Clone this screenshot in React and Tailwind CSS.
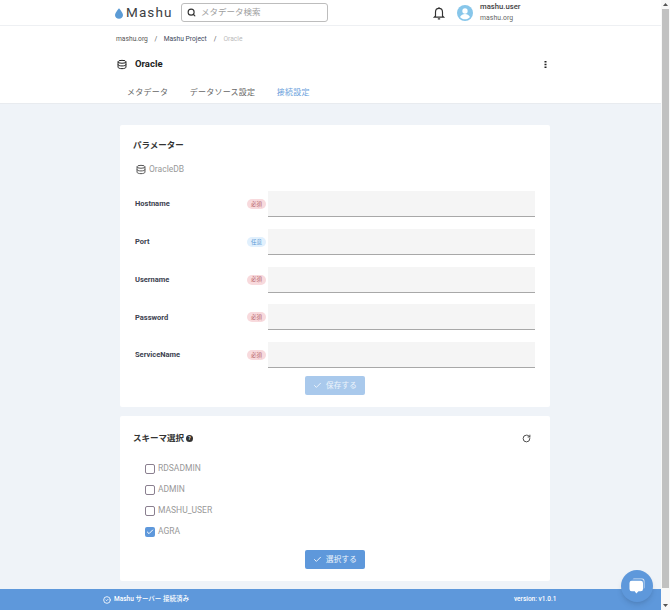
import React from 'react';
import { Search, Check, RotateCw, CircleCheck } from 'lucide-react';

const fontStack = "font-['Roboto','Noto_Sans_CJK_JP',sans-serif]";

const fields = [
  { name: 'Hostname', required: true },
  { name: 'Port', required: false },
  { name: 'Username', required: true },
  { name: 'Password', required: true },
  { name: 'ServiceName', required: true },
];

const schemas = [
  { name: 'RDSADMIN', checked: false },
  { name: 'ADMIN', checked: false },
  { name: 'MASHU_USER', checked: false },
  { name: 'AGRA', checked: true },
];

function DbIcon({ className }) {
  return (
    <svg className={className} viewBox="0 0 24 24" fill="none" stroke="currentColor" strokeWidth="2.4">
      <ellipse cx="12" cy="5.5" rx="9.5" ry="3.5" />
      <path d="M2.500 5.500v13c0 1.900 4.200 3.500 9.500 3.500s9.500-1.600 9.500-3.500v-13" />
      <path d="M2.500 12c0 1.900 4.200 3.500 9.500 3.500s9.500-1.600 9.500-3.500" />
    </svg>
  );
}

function Header() {
  return (
    <div className="h-[26px] shrink-0 bg-white border-b border-[#eef0f3] flex items-center">
      <div className="ml-[115px] flex items-center w-[66px]">
        <svg className="w-[8px] h-[11px] mt-[1px] shrink-0" viewBox="0 0 18 24">
          <path d="M9 0C9 0 0 10 0 15.500C0 20.500 4 24 9 24C14 24 18 20.500 18 15.500C18 10 9 0 9 0Z" fill="#5b9bd5" />
        </svg>
        <span className="ml-[3px] text-[13.5px] tracking-[1.1px] text-[#3c4043]">Mashu</span>
      </div>
      <div className="w-[147px] h-[19px] border border-[#bdbdbd] rounded-[3px] flex items-center pl-[5px]">
        <Search className="w-[9px] h-[9px] text-[#333]" strokeWidth={3} />
        <span className="ml-[5px] text-[8.5px] text-[#9e9e9e]">メタデータ検索</span>
      </div>
      <svg className="ml-[104px] w-[14px] h-[14px] text-[#333]" viewBox="0 0 24 24" fill="none" stroke="currentColor" strokeWidth="2">
        <path d="M6 17V10.500C6 7 8.500 4 12 4s6 3 6 6.500V17l2 2H4l2-2Z" />
        <path d="M10 22h4M12 2v2" />
      </svg>
      <svg className="ml-[11px] w-[16px] h-[16px]" viewBox="0 0 24 24">
        <circle cx="12" cy="12" r="12" fill="#87c6ea" />
        <circle cx="12" cy="9" r="4" fill="#fff" />
        <path d="M4.500 18c1.500-3 4.500-4.500 7.500-4.500s6 1.500 7.500 4.500c-2 2.200-4.600 3.500-7.500 3.500s-5.500-1.300-7.500-3.500Z" fill="#fff" />
      </svg>
      <div className="ml-[7px] flex flex-col">
        <span className="text-[7.7px] leading-[11px] font-medium text-[#444]">mashu.user</span>
        <span className="mt-[0.500px] text-[6.8px] leading-[11px] tracking-[0.1px] text-[#666]">mashu.org</span>
      </div>
    </div>
  );
}

function SubHeader() {
  return (
    <div className="h-[78px] shrink-0 bg-white border-b border-[#e8ebef] pl-[116px] flex flex-col">
      <div className="mt-[8px] h-[10px] flex items-center text-[6.7px] text-[#555]">
        <span>mashu.org</span>
        <span className="mx-[6.500px]">/</span>
        <span className="text-[#3d4a5c]">Mashu Project</span>
        <span className="mx-[7px]">/</span>
        <span className="text-[#bbb]">Oracle</span>
      </div>
      <div className="mt-[13px] h-[14px] flex items-center">
        <DbIcon className="ml-[1px] w-[10px] h-[11px] text-[#222]" />
        <span className="ml-[8px] text-[9.5px] font-bold text-[#222]">Oracle</span>
        <svg className="ml-[381px] w-[3px] h-[7px]" viewBox="0 0 3 7" fill="#222">
          <rect x="0.500" y="0" width="2" height="1.500" />
          <rect x="0.500" y="2.750" width="2" height="1.500" />
          <rect x="0.500" y="5.500" width="2" height="1.500" />
        </svg>
      </div>
      <div className="mt-[15px] ml-[11px] flex items-center gap-[21.500px] text-[8px] leading-[14px] tracking-[0.25px] text-[#666]">
        <span>メタデータ</span>
        <span>データソース設定</span>
        <span className="text-[#6a9fdc]">接続設定</span>
      </div>
    </div>
  );
}

function Field({ field }) {
  return (
    <div className="flex items-center h-[26px]">
      <span className="ml-[15px] w-[112px] text-[7.5px] font-bold text-[#3c4250]">{field.name}</span>
      <span
        className={
          field.required
            ? 'w-[19px] h-[10px] rounded-full bg-[#f8dadd] text-[#b5606a] text-[5.5px] flex items-center justify-center'
            : 'w-[19px] h-[10px] rounded-full bg-[#e1f0fd] text-[#5b9bd5] text-[5.5px] flex items-center justify-center'
        }
      >
        {field.required ? '必須' : '任意'}
      </span>
      <div className="ml-[2px] w-[267px] h-[26px] bg-[#f5f5f5] border-b border-[#a8a8a8]" />
    </div>
  );
}

function ActionButton({ label, dim }) {
  return (
    <button
      className={
        dim
          ? 'w-[60px] h-[19px] rounded-[2px] bg-[#a9c9ec] text-white/80 text-[7.5px] tracking-[0.3px] flex items-center justify-center gap-[4px]'
          : 'w-[60px] h-[19px] rounded-[2px] bg-[#5e98db] text-white/90 text-[7.5px] tracking-[0.3px] flex items-center justify-center gap-[4px]'
      }
    >
      <Check className="w-[9px] h-[9px]" strokeWidth={2.5} />
      {label}
    </button>
  );
}

function SchemaRow({ schema }) {
  return (
    <div className="h-[21px] flex items-center">
      {schema.checked ? (
        <span className="w-[10px] h-[10px] rounded-[2px] bg-[#5e98db] flex items-center justify-center">
          <Check className="w-[8px] h-[8px] text-white" strokeWidth={3} />
        </span>
      ) : (
        <span className="w-[10px] h-[10px] rounded-[2px] border-[1.5px] border-[#8a7f8f]" />
      )}
      <span className="ml-[3px] text-[8.5px] text-[#999]">{schema.name}</span>
    </div>
  );
}

export default function App() {
  return (
    <div className={`w-[670px] h-[610px] overflow-hidden flex ${fontStack}`}>
      <div className="relative w-[661px] h-full bg-[#eff3f8] flex flex-col">
        <Header />
        <SubHeader />

        <div className="ml-[120px] mt-[21px] w-[430px] h-[282px] bg-white rounded-[2px] pl-[13px] flex flex-col">
          <h2 className="mt-[14px] text-[8.500px] leading-[12px] font-bold text-[#333]">パラメーター</h2>
          <div className="mt-[12px] ml-[3px] h-[12px] flex items-center">
            <DbIcon className="w-[10px] h-[11px] text-[#555]" />
            <span className="ml-[3px] text-[8.5px] text-[#999]">OracleDB</span>
          </div>
          <div className="mt-[16px] -ml-[13px] flex flex-col gap-[11.750px]">
            {fields.map((field) => (
              <Field key={field.name} field={field} />
            ))}
          </div>
          <div className="mt-[8px] -ml-[13px] flex justify-center">
            <ActionButton label="保存する" dim />
          </div>
        </div>

        <div className="ml-[120px] mt-[9px] w-[430px] h-[165px] bg-white rounded-[2px] pl-[13px] flex flex-col">
          <div className="mt-[16px] h-[13px] flex items-center">
            <h2 className="text-[8.500px] font-bold text-[#333]">スキーマ選択</h2>
            <span className="ml-[2px] w-[7px] h-[7px] rounded-full bg-[#333] text-white text-[5px] font-bold flex items-center justify-center">?</span>
            <RotateCw className="ml-[329px] w-[9px] h-[9px] text-[#444]" strokeWidth={2.5} />
          </div>
          <div className="mt-[13px] ml-[12px] flex flex-col">
            {schemas.map((schema) => (
              <SchemaRow key={schema.name} schema={schema} />
            ))}
          </div>
          <div className="mt-[8px] -ml-[13px] flex justify-center">
            <ActionButton label="選択する" />
          </div>
        </div>

        <div className="mt-[8px] h-[21px] bg-[#5e98db] flex items-center text-white text-[6.5px]">
          <CircleCheck className="ml-[103px] w-[8px] h-[8px]" strokeWidth={2.5} />
          <span className="ml-[3px] font-medium">Mashu サーバー 接続済み</span>
          <span className="ml-[325px] font-medium">version: v1.0.1</span>
        </div>

        {/* chat bubble */}
        <div className="absolute left-[621px] top-[570px] w-[32px] h-[32px] rounded-full bg-[#5e98db] shadow-md flex items-center justify-center">
          <svg className="w-[18px] h-[18px]" viewBox="0 0 24 24">
            <path d="M8 2h11a3 3 0 0 1 3 3v9a3 3 0 0 1-1 2V6a3 3 0 0 0-3-3H6a3 3 0 0 1 2-1Z" fill="#d8e6f6" />
            <path d="M5 5h12a3 3 0 0 1 3 3v8a3 3 0 0 1-3 3h-3l-3 3-2-3H5a3 3 0 0 1-3-3V8a3 3 0 0 1 3-3Z" fill="#fff" />
          </svg>
        </div>
      </div>

      {/* scrollbar */}
      <div className="w-[9px] h-full bg-[#f8f8f8] flex flex-col items-center">
        <svg className="w-[5px] h-[9px] shrink-0" viewBox="0 0 5 9" fill="#555"><path d="M0 6 2.500 3 5 6Z" /></svg>
        <div className="w-[7px] h-[579px] bg-[#c1c1c1]" />
        <div className="flex-1" />
        <svg className="w-[5px] h-[9px] shrink-0" viewBox="0 0 5 9" fill="#555"><path d="M0 3 2.500 6 5 3Z" /></svg>
      </div>
    </div>
  );
}
